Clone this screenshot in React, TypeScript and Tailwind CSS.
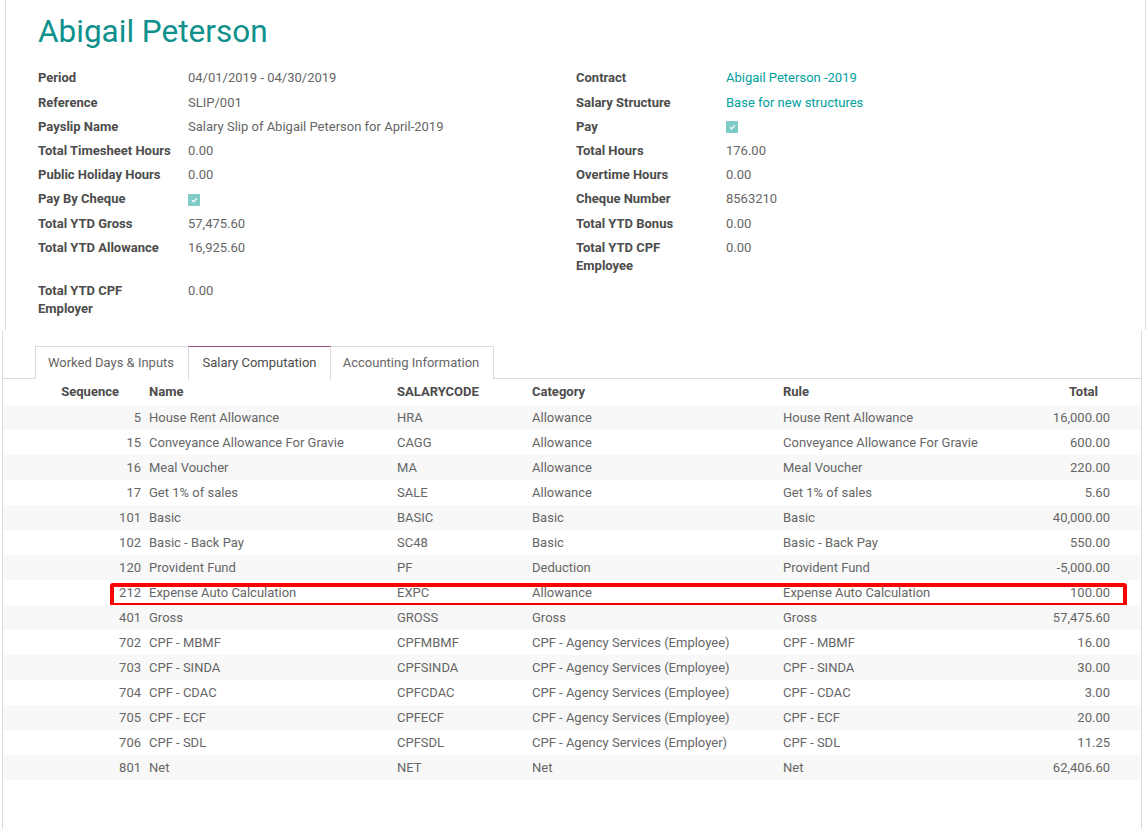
import React from "react";

const font = { fontFamily: "Roboto, 'Noto Sans', sans-serif" };

function Check() {
  return (
    <div className="w-[12px] h-[12px] bg-[#7fcbc6] flex items-center justify-center rounded-[1px]">
      <svg width="7" height="6" viewBox="0 0 7 6">
        <path d="M1 3.2 L2.7 4.8 L6 1.2" stroke="#ffffff" strokeWidth="1.2" fill="none" />
      </svg>
    </div>
  );
}

type Field = { label: React.ReactNode; value: React.ReactNode };

function Row({ f }: { f: Field }) {
  return (
    <div className="flex pb-[5.6px] leading-[18.6px]">
      <div className="w-[150px] shrink-0 font-bold text-[#4c4c4c]">{f.label}</div>
      <div className="text-[#666666] flex items-center h-[18.6px]">{f.value}</div>
    </div>
  );
}

const left: Field[] = [
  { label: "Period", value: "04/01/2019 - 04/30/2019" },
  { label: "Reference", value: "SLIP/001" },
  { label: "Payslip Name", value: "Salary Slip of Abigail Peterson for April-2019" },
  { label: "Total Timesheet Hours", value: "0.00" },
  { label: "Public Holiday Hours", value: "0.00" },
  { label: "Pay By Cheque", value: <Check /> },
  { label: "Total YTD Gross", value: "57,475.60" },
  { label: "Total YTD Allowance", value: "16,925.60" },
];

const link = "text-[#00a09d]";

const right: Field[] = [
  { label: "Contract", value: <span className={link}>Abigail Peterson -2019</span> },
  { label: "Salary Structure", value: <span className={link}>Base for new structures</span> },
  { label: "Pay", value: <Check /> },
  { label: "Total Hours", value: "176.00" },
  { label: "Overtime Hours", value: "0.00" },
  { label: "Cheque Number", value: "8563210" },
  { label: "Total YTD Bonus", value: "0.00" },
  {
    label: (
      <>
        Total YTD CPF
        <br />
        Employee
      </>
    ),
    value: "0.00",
  },
];

const lines: [string, string, string, string, string, string][] = [
  ["5", "House Rent Allowance", "HRA", "Allowance", "House Rent Allowance", "16,000.00"],
  ["15", "Conveyance Allowance For Gravie", "CAGG", "Allowance", "Conveyance Allowance For Gravie", "600.00"],
  ["16", "Meal Voucher", "MA", "Allowance", "Meal Voucher", "220.00"],
  ["17", "Get 1% of sales", "SALE", "Allowance", "Get 1% of sales", "5.60"],
  ["101", "Basic", "BASIC", "Basic", "Basic", "40,000.00"],
  ["102", "Basic - Back Pay", "SC48", "Basic", "Basic - Back Pay", "550.00"],
  ["120", "Provident Fund", "PF", "Deduction", "Provident Fund", "-5,000.00"],
  ["212", "Expense Auto Calculation", "EXPC", "Allowance", "Expense Auto Calculation", "100.00"],
  ["401", "Gross", "GROSS", "Gross", "Gross", "57,475.60"],
  ["702", "CPF - MBMF", "CPFMBMF", "CPF - Agency Services (Employee)", "CPF - MBMF", "16.00"],
  ["703", "CPF - SINDA", "CPFSINDA", "CPF - Agency Services (Employee)", "CPF - SINDA", "30.00"],
  ["704", "CPF - CDAC", "CPFCDAC", "CPF - Agency Services (Employee)", "CPF - CDAC", "3.00"],
  ["705", "CPF - ECF", "CPFECF", "CPF - Agency Services (Employee)", "CPF - ECF", "20.00"],
  ["706", "CPF - SDL", "CPFSDL", "CPF - Agency Services (Employer)", "CPF - SDL", "11.25"],
  ["801", "Net", "NET", "Net", "Net", "62,406.60"],
];

export default function App() {
  return (
    <div className="w-[1148px] h-[829px] bg-white overflow-hidden flex flex-col text-[13px]" style={font}>
      {/* Top form sheet */}
      <div className="ml-[5px] w-[1141px] h-[330px] shrink-0 border-l border-r border-[#dcdcdc] pl-[32px] pr-[32px]">
        <div className="pt-[13px] text-[31.5px] leading-[38.4px] text-[#0e918c]">Abigail Peterson</div>
        <div className="mt-[18px] flex">
          <div className="w-[538px]">
            {left.map((f, i) => (
              <Row key={i} f={f} />
            ))}
            <div className="h-[18.6px]" />
            <Row
              f={{
                label: (
                  <>
                    Total YTD CPF
                    <br />
                    Employer
                  </>
                ),
                value: "0.00",
              }}
            />
          </div>
          <div className="flex-1">
            {right.map((f, i) => (
              <Row key={i} f={f} />
            ))}
          </div>
        </div>
      </div>

      {/* Bottom notebook */}
      <div className="ml-[2px] w-[1140px] flex-1 border-l border-r border-[#dcdcdc] pt-[16px]">
        <div className="flex border-b border-[#d8dadd] pl-[32px] h-[33px]">
          <div className="w-[154px] h-[33px] border border-b-0 border-[#d8dadd] flex items-center justify-center text-[#666666] bg-white pr-[2px]">
            Worked Days &amp; Inputs
          </div>
          <div className="w-[143px] -ml-px border border-b-0 border-[#d8dadd] border-t-[#9b4a85] flex items-center justify-center text-[#4c4c4c] bg-white relative z-10 -mb-px h-[34px] pb-px">
            Salary Computation
          </div>
          <div className="w-[164px] h-[33px] -ml-px border border-b-0 border-[#d8dadd] flex items-center justify-center text-[#666666] bg-white pr-[2px]">
            Accounting Information
          </div>
        </div>

        {/* header */}
        <div className="flex h-[26px] items-center font-bold text-[#4c4c4c]">
          <div className="w-[138px] text-right pr-[22px]">Sequence</div>
          <div className="w-[256px] pl-[8px]">Name</div>
          <div className="w-[135px]">SALARYCODE</div>
          <div className="w-[251px]">Category</div>
          <div className="w-[227px]">Rule</div>
          <div className="w-[100px] text-right pr-[12px]">Total</div>
        </div>

        {lines.map((l, i) => (
          <div
            key={i}
            className={`relative flex h-[25px] items-center text-[#666666] ${i % 2 === 0 ? "bg-[#f8f8f8]" : "bg-white"}`}
          >
            <div className="w-[138px] text-right">{l[0]}</div>
            <div className="w-[256px] pl-[8px] whitespace-nowrap">{l[1]}</div>
            <div className="w-[135px]">{l[2]}</div>
            <div className="w-[251px] whitespace-nowrap">{l[3]}</div>
            <div className="w-[227px] whitespace-nowrap">{l[4]}</div>
            <div className="w-[100px] text-right">{l[5]}</div>
            {l[0] === "212" && (
              <div className="absolute left-[107px] top-[3px] w-[1017px] h-[24px] border-[4px] border-[#ff0000] rounded-[3px]" />
            )}
          </div>
        ))}
      </div>
    </div>
  );
}
